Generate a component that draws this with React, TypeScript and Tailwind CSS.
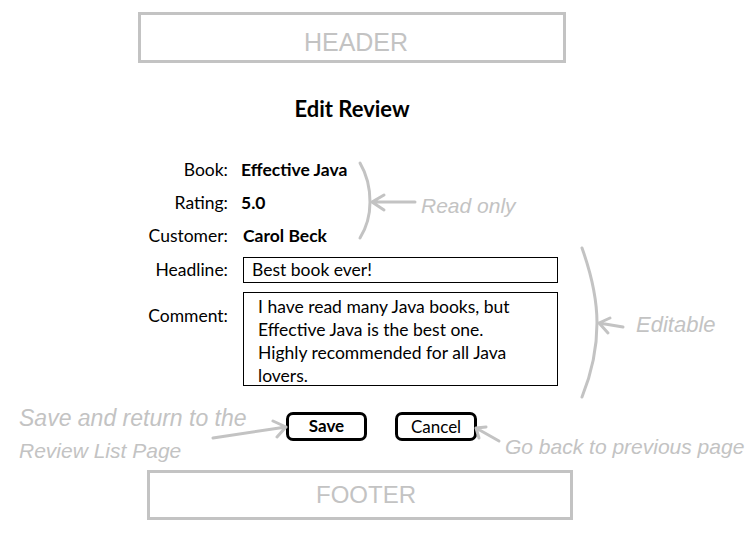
const body = "font-['Lato',sans-serif] text-black";
const hand = "absolute font-['Liberation_Sans',sans-serif] italic text-[#c3c3c3] leading-[24px] whitespace-nowrap";

function Row({ label, children }: { label: string; children: React.ReactNode }) {
  return (
    <div className="flex h-[33px] items-center">
      <div className="w-[228px] text-right text-[17.5px]">{label}</div>
      <div className="ml-[13px] text-[17.5px] font-bold">{children}</div>
    </div>
  );
}

export default function App() {
  return (
    <div className={`relative h-[533px] w-[754px] overflow-hidden bg-white ${body}`}>
      {/* header */}
      <div className="ml-[138px] mt-[12px] flex h-[51px] w-[428px] justify-center border-[3px] border-[#c3c3c3] pl-[8px] pt-[12px] font-['Liberation_Sans',sans-serif] text-[25px] leading-[30px] text-[#c3c3c3]">
        HEADER
      </div>

      <div className="ml-[138px] mt-[32px] w-[428px] text-center text-[22px] font-bold leading-[28px]">Edit Review</div>

      <div className="mt-[31px]">
        <Row label="Book:">Effective Java</Row>
        <Row label="Rating:">5.0</Row>
        <Row label="Customer:">
          <span className="ml-[2px]">Carol Beck</span>
        </Row>

        <div className="mt-[4px] flex items-center">
          <div className="w-[228px] text-right text-[17.5px]">Headline:</div>
          <div className="ml-[15px] flex h-[26px] w-[315px] items-center border border-black px-[8px] text-[17.5px]">
            Best book ever!
          </div>
        </div>

        <div className="mt-[9px] flex items-start">
          <div className="w-[228px] pt-[13px] text-right text-[17.5px] leading-[22px]">Comment:</div>
          <div className="ml-[15px] h-[94px] w-[315px] border border-black pl-[14px] pt-[2px] text-[17.5px] leading-[23px]">
            I have read many Java books, but
            <br />
            Effective Java is the best one.
            <br />
            Highly recommended for all Java
            <br />
            lovers.
          </div>
        </div>
      </div>

      <div className="ml-[286px] mt-[26px] flex gap-[28px]">
        <button className="flex h-[29px] w-[81px] items-center justify-center rounded-[7px] border-[3px] border-black pb-[3px] text-[17px] font-bold">
          Save
        </button>
        <button className="flex h-[29px] w-[82px] items-center justify-center rounded-[7px] border-[3px] border-black text-[17px]">
          Cancel
        </button>
      </div>

      {/* footer */}
      <div className="ml-[147px] mt-[29px] flex h-[50px] w-[426px] justify-center border-[3px] border-[#c3c3c3] pl-[12px] pt-[8px] font-['Liberation_Sans',sans-serif] text-[24px] leading-[28px] text-[#c3c3c3]">
        FOOTER
      </div>

      {/* annotations */}
      <svg className="pointer-events-none absolute left-0 top-0" width="754" height="533" fill="none" stroke="#c3c3c3" strokeWidth="3" strokeLinecap="round">
        <path d="M360 163 Q370 180 370 202 Q370 222 360 238" />
        <path d="M372 202 L415 202 M372 202 L384 195 M372 202 L384 210" />
        <path d="M582 248 Q597 290 597 323 Q597 360 582 397" />
        <path d="M599 323 L623 327 M599 323 L610 318 M599 323 L608 333" />
        <path d="M213 438 L286 427 M286 427 L273 421 M286 427 L277 437" />
        <path d="M476 428 L499 441 M476 428 L486 427 M476 428 L479 438" />
      </svg>
      <div className={`${hand} left-[421px] top-[194px] text-[21px]`}>Read only</div>
      <div className={`${hand} left-[636px] top-[313px] text-[22px]`}>Editable</div>
      <div className={`${hand} left-[19px] top-[406px] text-[23px]`}>Save and return to the</div>
      <div className={`${hand} left-[19px] top-[439px] text-[21px]`}>Review List Page</div>
      <div className={`${hand} left-[505px] top-[435px] text-[21px]`}>Go back to previous page</div>
    </div>
  );
}
